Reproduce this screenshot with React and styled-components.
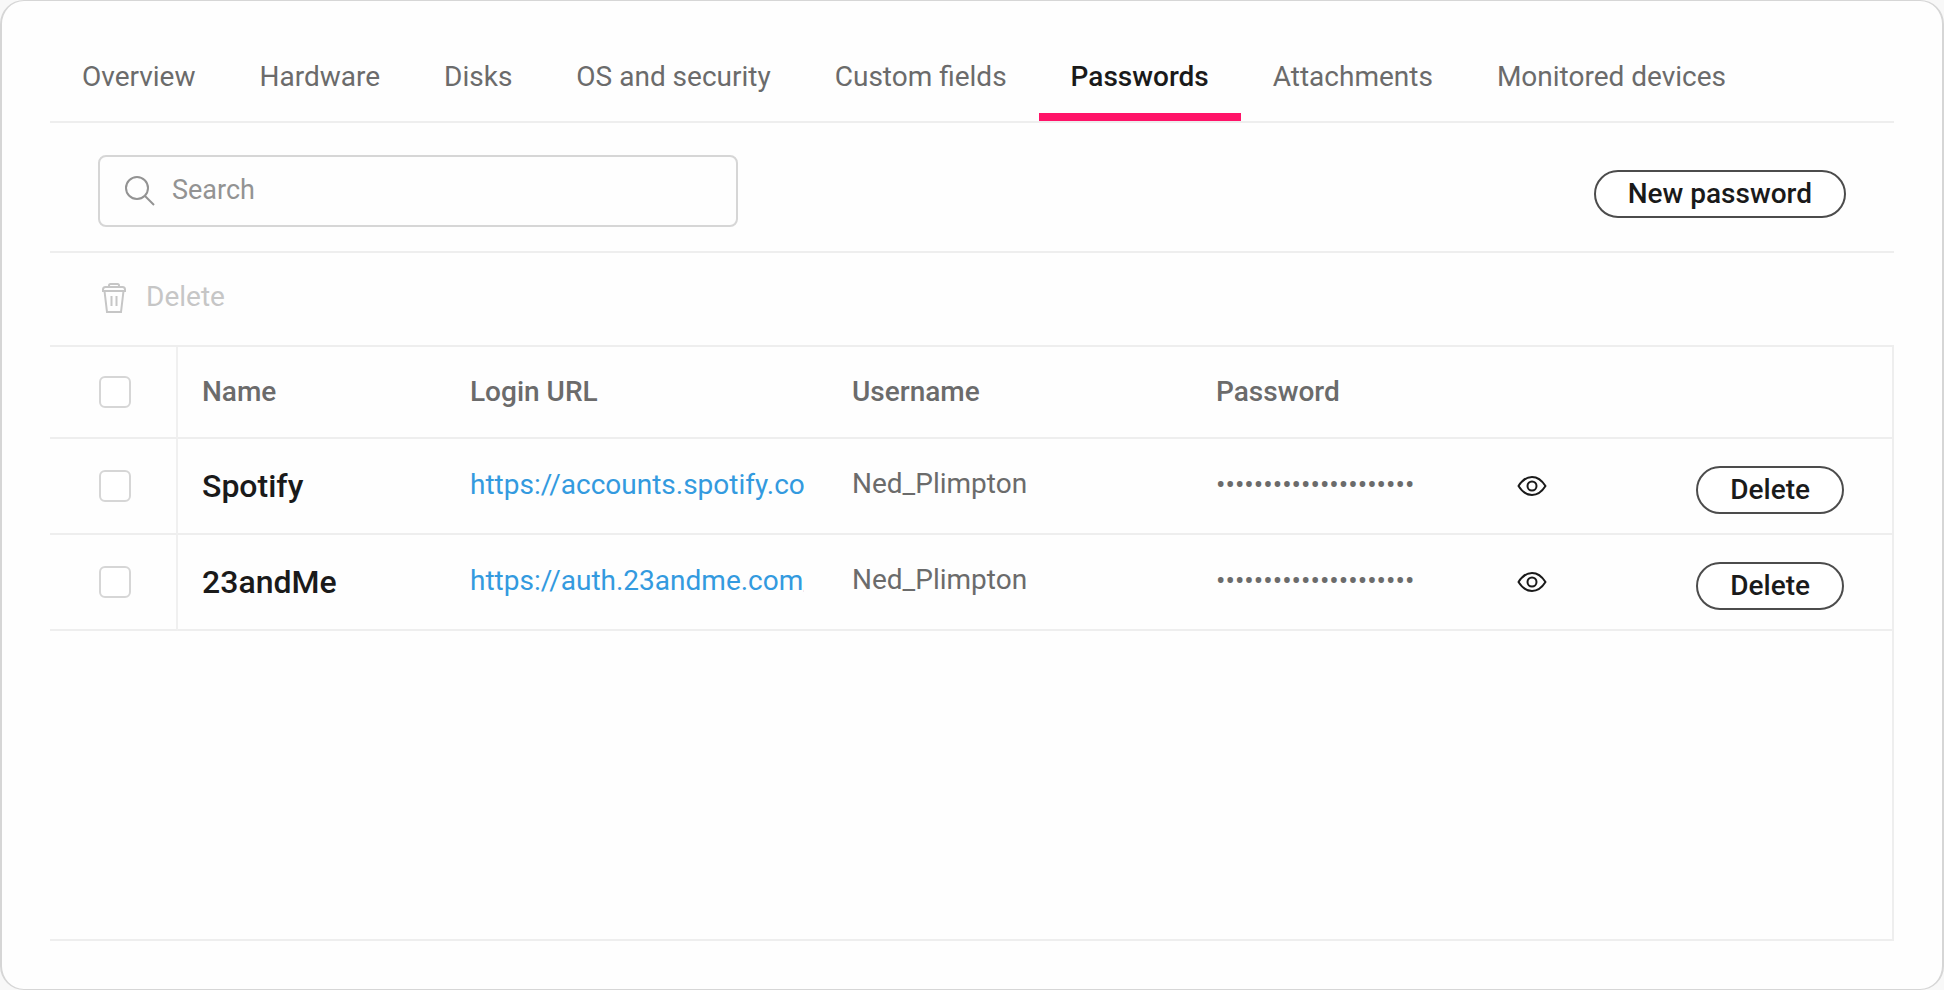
import { useState } from "react";
import styled, { createGlobalStyle } from "styled-components";

const GlobalStyle = createGlobalStyle`
  * {
    box-sizing: border-box;
  }
  body {
    margin: 0;
    background-color: #f8f8f8;
    color: #6b6b6b;
    font-family: Roboto, "Liberation Sans", sans-serif;
    font-size: 28px;
    line-height: 32px;
  }
  button,
  input {
    font: inherit;
    color: inherit;
  }
  svg {
    display: block;
    flex: none;
  }
`;

const Card = styled.main`
  display: flex;
  flex-direction: column;
  min-height: 100vh;
  padding: 32px 48px 48px;
  background-color: #fefefe;
  border: solid #d6d6d6;
  border-width: 1px 2px;
  border-radius: 24px;
`;

const Tabs = styled.nav`
  display: flex;
  border-bottom: 2px solid #eeeeee;
`;

const Tab = styled.a`
  height: 88px;
  padding: 28px 32px 20px;
  border-bottom: 8px solid ${({ $active }) => ($active ? "#ff1368" : "transparent")};
  color: ${({ $active }) => ($active ? "#1a1a1a" : "#6b6b6b")};
  font-weight: ${({ $active }) => ($active ? 500 : 400)};
  text-decoration: none;
  white-space: nowrap;
`;

const SearchBar = styled.div`
  display: flex;
  justify-content: space-between;
  padding: 32px 48px 24px;
  border-bottom: 2px solid #eeeeee;
`;

const SearchField = styled.label`
  display: flex;
  align-items: center;
  gap: 16px;
  width: 640px;
  height: 72px;
  padding: 0 24px;
  border: 2px solid #d6d6d6;
  border-radius: 8px;
`;

const SearchInput = styled.input`
  flex: 1;
  min-width: 0;
  padding: 0 0 2px;
  border: none;
  outline: none;
  background: transparent;
  font-size: 27px;
  &::placeholder {
    color: #939393;
    opacity: 1;
  }
`;

const PillButton = styled.button`
  height: 48px;
  padding: 0 32px;
  background-color: #ffffff;
  border: 2px solid #4c4c4c;
  border-radius: 24px;
  color: #1a1a1a;
  font-weight: 500;
  line-height: 44px;
  white-space: nowrap;
  cursor: pointer;
`;

const NewPassword = styled(PillButton)`
  align-self: flex-end;
  margin-bottom: 9px;
`;

const Toolbar = styled.div`
  display: flex;
  padding: 26px 48px 30px;
`;

const ToolbarButton = styled.button`
  display: flex;
  align-items: center;
  gap: 16px;
  height: 36px;
  padding: 0;
  border: none;
  background: transparent;
  color: #c6c6c6;
`;

const TablePanel = styled.div`
  flex: 1;
  border: solid #eeeeee;
  border-width: 2px 2px 2px 0;
`;

const Table = styled.table`
  width: 100%;
  table-layout: fixed;
  border-collapse: separate;
  border-spacing: 0;
  text-align: left;
`;

const Col = styled.col`
  width: ${({ $width }) => $width};
`;

const HeadCell = styled.th`
  height: 92px;
  padding: 0 24px;
  border-bottom: 2px solid #eeeeee;
  font-weight: 500;
`;

const Cell = styled.td`
  height: 96px;
  padding: 0 24px 4px;
  border-bottom: 2px solid #eeeeee;
`;

const SelectHead = styled(HeadCell)`
  padding: 0 0 0 49px;
  border-right: 2px solid #f0f0f0;
`;

const SelectCell = styled(Cell)`
  padding: 0 0 0 49px;
  border-right: 2px solid #f0f0f0;
`;

const NameCell = styled(Cell)`
  padding-bottom: 0;
  color: #1a1a1a;
  font-size: 32px;
  font-weight: 500;
`;

const LowCell = styled(Cell)`
  padding-bottom: 2px;
`;

const EyeCell = styled(Cell)`
  padding-bottom: 0;
`;

const ActionCell = styled(Cell)`
  padding: 8px 48px 0 0;
  text-align: right;
`;

const Checkbox = styled.input`
  display: block;
  appearance: none;
  width: 32px;
  height: 32px;
  margin: 0;
  background-color: #ffffff;
  border: 2px solid #d6d6d6;
  border-radius: 6px;
  &:checked {
    background-color: #339adf;
  }
`;

const UrlLink = styled.a`
  display: block;
  overflow: hidden;
  color: #339adf;
  text-decoration: none;
  white-space: nowrap;
`;

const EyeButton = styled.button`
  display: block;
  padding: 0;
  border: none;
  background: transparent;
  color: #1a1a1a;
  cursor: pointer;
`;

const tabs = [
  "Overview",
  "Hardware",
  "Disks",
  "OS and security",
  "Custom fields",
  "Passwords",
  "Attachments",
  "Monitored devices",
];

const passwords = [
  {
    name: "Spotify",
    url: "https://accounts.spotify.com",
    username: "Ned_Plimpton",
    password: "belafonte-deep-search",
  },
  {
    name: "23andMe",
    url: "https://auth.23andme.com/",
    username: "Ned_Plimpton",
    password: "jaguar-shark-explorer",
  },
];

function SearchIcon() {
  return (
    <svg width="32" height="32" viewBox="0 0 32 32" fill="none" stroke="#939393" strokeWidth="2">
      <circle cx="13" cy="13" r="11" />
      <path d="M21 21l9 9" />
    </svg>
  );
}

function TrashIcon() {
  return (
    <svg width="32" height="32" viewBox="0 0 32 32" fill="none" stroke="currentColor" strokeWidth="2">
      <path d="M11 6V4.5q0-1.500 1.500-1.500h7q1.500 0 1.500 1.500V6" />
      <path d="M5 10V8.500Q5 6 7.500 6h17Q27 6 27 8.500V10z" />
      <path d="M6.500 10l2.500 21h14L25.500 10M13.500 15v10M18.500 15v10" />
    </svg>
  );
}

function EyeIcon() {
  return (
    <svg width="32" height="32" viewBox="0 0 32 32" fill="none" stroke="currentColor" strokeWidth="2">
      <path
        d="M2.500 16C6 10.500 10.500 7 16 7s10 3.500 13.500 9C26 21.500 21.500 25 16 25S6 21.500 2.500 16z"
        strokeLinejoin="round"
      />
      <circle cx="16" cy="16" r="4.500" />
    </svg>
  );
}

function PasswordRow({ item }) {
  const [visible, setVisible] = useState(false);

  return (
    <tr>
      <SelectCell>
        <Checkbox type="checkbox" aria-label={`Select ${item.name}`} />
      </SelectCell>
      <NameCell>{item.name}</NameCell>
      <LowCell>
        <UrlLink href={item.url}>{item.url}</UrlLink>
      </LowCell>
      <Cell>{item.username}</Cell>
      <LowCell>{visible ? item.password : "•".repeat(item.password.length)}</LowCell>
      <EyeCell>
        <EyeButton
          aria-label={visible ? "Hide password" : "Show password"}
          onClick={() => setVisible(!visible)}
        >
          <EyeIcon />
        </EyeButton>
      </EyeCell>
      <ActionCell>
        <PillButton>Delete</PillButton>
      </ActionCell>
    </tr>
  );
}

export default function App() {
  return (
    <>
      <GlobalStyle />
      <Card>
        <Tabs>
          {tabs.map((tab) => (
            <Tab key={tab} href="#" $active={tab === "Passwords"}>
              {tab}
            </Tab>
          ))}
        </Tabs>

        <SearchBar>
          <SearchField>
            <SearchIcon />
            <SearchInput type="text" placeholder="Search" aria-label="Search" />
          </SearchField>
          <NewPassword>New password</NewPassword>
        </SearchBar>

        <Toolbar>
          <ToolbarButton disabled>
            <TrashIcon />
            Delete
          </ToolbarButton>
        </Toolbar>

        <TablePanel>
          <Table>
            <colgroup>
              <Col $width="128px" />
              <Col $width="268px" />
              <Col $width="382px" />
              <Col $width="364px" />
              <Col $width="300px" />
              <Col $width="auto" />
              <Col $width="220px" />
            </colgroup>
            <thead>
              <tr>
                <SelectHead>
                  <Checkbox type="checkbox" aria-label="Select all" />
                </SelectHead>
                <HeadCell>Name</HeadCell>
                <HeadCell>Login URL</HeadCell>
                <HeadCell>Username</HeadCell>
                <HeadCell>Password</HeadCell>
                <HeadCell />
                <HeadCell />
              </tr>
            </thead>
            <tbody>
              {passwords.map((item) => (
                <PasswordRow key={item.name} item={item} />
              ))}
            </tbody>
          </Table>
        </TablePanel>
      </Card>
    </>
  );
}
